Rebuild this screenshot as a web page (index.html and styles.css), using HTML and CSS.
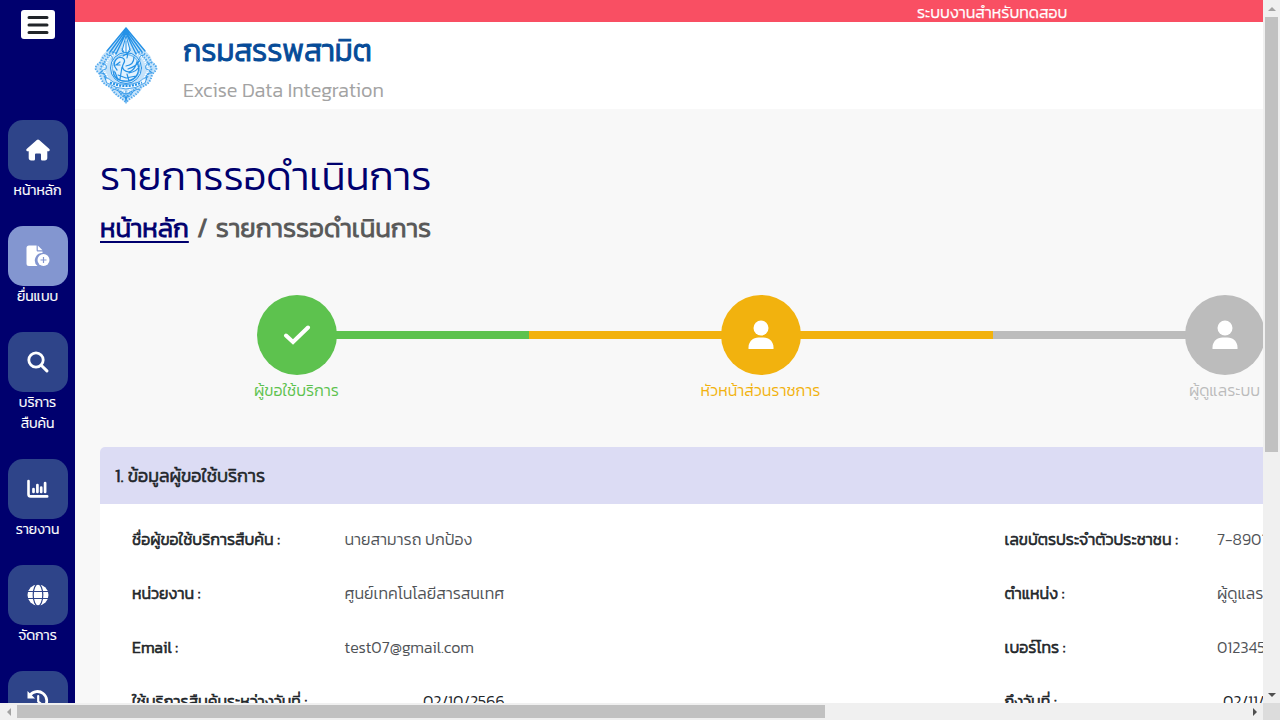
FILE: index.html
```html
<!DOCTYPE html>
<html lang="th">
<head>
<meta charset="utf-8">
<title>Excise Data Integration</title>
<link rel="stylesheet" href="styles.css">
</head>
<body>
<div class="window">
  <div class="viewport">
    <nav class="sidebar">
      <button class="menu-btn" aria-label="menu"><svg width="22" height="20" viewBox="0 0 22 20"><path d="M2 2.400h18M2 10h18M2 17.500h18" stroke="#212529" stroke-width="3" stroke-linecap="round"/></svg></button>
      <a class="nav-item"><span class="tile"><svg width="24" height="22" viewBox="0 0 24 22"><path fill="#fff" d="M10.800 1a1.800 1.800 0 0 1 2.400 0l9.900 8.800c1.200 1.100.5 2.500-.8 2.500h-1v6.700c0 1.600-.9 2.500-2.500 2.500h-2.200c-1 0-1.600-.6-1.600-1.600v-4.100c0-.8-.5-1.300-1.300-1.300h-3.400c-.8 0-1.300.5-1.300 1.300v4.100c0 1-.6 1.600-1.600 1.600H5.200c-1.600 0-2.500-.9-2.500-2.500v-6.700h-1c-1.300 0-2-1.400-.8-2.500z"/></svg></span><span class="nav-label">หน้าหลัก</span></a>
      <a class="nav-item"><span class="tile active"><svg width="24" height="22" viewBox="0 0 24 22"><path fill="#fff" d="M3 .5h7.600v4.700c0 .8.6 1.400 1.400 1.400h4.500v1.500a7.300 7.300 0 0 0-5 12.900H3A2.500 2.500 0 0 1 .5 18.500V3A2.500 2.500 0 0 1 3 .5zM11.800.5l4.700 4.800h-4.700z"/><circle cx="17.500" cy="15" r="6" fill="#fff"/><path d="M17.500 12v6M14.500 15h6" stroke="#8396d0" stroke-width="1.200"/></svg></span><span class="nav-label">ยื่นแบบ</span></a>
      <a class="nav-item"><span class="tile"><svg width="22" height="22" viewBox="0 0 22 22"><circle cx="9" cy="9" r="7.200" fill="none" stroke="#fff" stroke-width="2.800"/><path d="M14.200 14.200l5.700 5.700" stroke="#fff" stroke-width="3" stroke-linecap="round"/></svg></span><span class="nav-label">บริการ<br>สืบค้น</span></a>
      <a class="nav-item"><span class="tile"><svg width="22" height="20" viewBox="0 0 22 20"><path d="M1.500 2v13.200c0 1.500.7 2.200 2.200 2.200h16.500" fill="none" stroke="#fff" stroke-width="2.600" stroke-linecap="round"/><path d="M6.500 10v3M10.400 6v7M14.200 8.500v4.500M18.100 4v9" stroke="#fff" stroke-width="2.700" stroke-linecap="round"/></svg></span><span class="nav-label">รายงาน</span></a>
      <a class="nav-item"><span class="tile"><svg width="22" height="22" viewBox="0 0 22 22"><circle cx="11" cy="11" r="10.500" fill="#fff"/><g fill="none" stroke="#2e4489" stroke-width="1.200"><ellipse cx="11" cy="11" rx="4.800" ry="11"/><path d="M0 7.500h22M0 14.500h22"/></g></svg></span><span class="nav-label">จัดการ</span></a>
      <a class="nav-item"><span class="tile"><svg width="22" height="22" viewBox="0 0 22 22"><path d="M3 5.200A9.300 9.300 0 1 1 4.500 18" fill="none" stroke="#fff" stroke-width="2.800" stroke-linecap="round"/><path d="M.5 1v7.600h7.600z" fill="#fff"/><path d="M11.200 6v5.500l3.600 3" fill="none" stroke="#fff" stroke-width="2.200" stroke-linecap="round"/></svg></span></a>
    </nav>
    <div class="page">
      <div class="notice">ระบบงานสำหรับทดสอบ</div>
      <header class="brand">
        <svg class="emblem" width="66" height="78" viewBox="0 0 66 78">
          <path fill="#c4e2fa" d="M33 1L52 24Q58 28 59 34Q65 39 64 42Q62 46 59 48Q58 57 50 60Q45 69 39 70L33 77L27 70Q21 69 16 60Q8 57 7 48Q4 46 2 42Q1 39 7 34Q8 28 14 24z"/>
          <g fill="none" stroke="#2491e6" stroke-linecap="round">
            <g stroke-width="1.400"><path d="M33 1L14 24M33 3L17 25M33 5L20 26M33 6L23 27M33 1L52 24M33 3L49 25M33 5L46 26M33 6L43 27"/><path d="M33 9l-4 15 4 4 4-4z" fill="#eaf5ff" stroke-width="1"/><path d="M33 14v15M29 22l4 6 4-6" stroke-width="1"/></g>
            <g stroke-linecap="butt" stroke="#4ba5ec">
              <path stroke-width="2" stroke-dasharray="1.300 1.500" d="M20 25C12 27 9 31 8 35C1 40 1 42 7 47C8 55 12 58 18 60C22 68 26 69 33 75C40 69 44 68 48 60C54 58 58 55 59 47C65 42 65 40 58 35C57 31 54 27 46 25"/>
              <path stroke-width="2" stroke-dasharray="1.600 1.200" d="M23 26C15 29 12 33 11 37C6 41 7 43 11 47C12 53 16 56 21 58C25 64 28 66 33 71C38 66 41 64 45 58C50 56 54 53 55 47C59 43 60 41 55 37C54 33 51 29 43 26"/>
              <path stroke-width="2" stroke-dasharray="1 1.300" stroke="#fff" d="M22 27C16 30 14 34 13 38C9 41 10 43 13 47C15 53 18 55 23 58M44 27C50 30 52 34 53 38C57 41 56 43 53 47C51 53 48 55 43 58M28 61q5 9 10 0"/>
            </g>
            <circle cx="33" cy="41" r="15.500" fill="#e2f1fd" stroke-width="1"/>
            <circle cx="33" cy="41" r="13.500" stroke-width="1.400" stroke="#7bbdf1" stroke-dasharray="1 1"/>
            <g stroke-width="1.200"><path d="M24 43c-7-8 2-16 7-11c3 4-5 6 0 11c6 5 11-1 13-8c4 9 0 17-9 19c-10 1-16-5-14-10M33 39q8-1 8-9M35 42q9-3 11-8M36 46q9-2 10-7M27 35l-4 3 4 0M30 29l5-3-1 5M25 48l8 3 10-2M29 40l-2 12M22 45l3 8M34 47l2 7"/></g>
            <path fill="#f4faff" stroke-width=".8" d="M12 50q5 2 8 5q13 5 26 0q3-3 8-5l-2 6q-19 12-38 0z"/>
            <path d="M17 55.500q16 7 32 0" stroke-width="2.200" stroke-linecap="butt" stroke-dasharray="2 1.200"/>
            <path stroke-width=".8" d="M20 62q7 1 8 6M27 64q5 2 6 9M46 62q-7 1-8 6M39 64q-5 2-6 9M29 65q4 4 8 0M29 69q4 3 8 0M33 64v12M9 36q6 1 4 6q-5 1-6 4q7 0 6 6M57 36q-6 1-4 6q5 1 6 4q-7 0-6 6M15 28q6 0 4 5M51 28q-6 0-4 5"/>
          </g>
        </svg>
        <div class="brand-text"><span class="brand-name">กรมสรรพสามิต</span><span class="brand-sub">Excise Data Integration</span></div>
      </header>
      <main class="content">
        <h1 class="title">รายการรอดำเนินการ</h1>
        <div class="crumbs"><a class="crumb-link">หน้าหลัก</a><span class="slash">/</span><span>รายการรอดำเนินการ</span></div>
        <ol class="steps">
          <li class="step done"><span class="dot"><svg width="28" height="20" viewBox="0 0 28 20"><path d="M3 10.500l7 6.500L25 2.500" fill="none" stroke="#fff" stroke-width="4" stroke-linecap="round"/></svg></span><span class="step-label">ผู้ขอใช้บริการ</span></li>
          <li class="step current"><span class="dot"><svg width="26" height="30" viewBox="0 0 26 30"><circle cx="13" cy="8" r="7.500" fill="#fff"/><path fill="#fff" d="M.5 29v-1.500c0-6 4.500-10 10-10h5c5.500 0 10 4 10 10V29z"/></svg></span><span class="step-label">หัวหน้าส่วนราชการ</span></li>
          <li class="step wait"><span class="dot"><svg width="26" height="30" viewBox="0 0 26 30"><circle cx="13" cy="8" r="7.500" fill="#fff"/><path fill="#fff" d="M.5 29v-1.500c0-6 4.500-10 10-10h5c5.500 0 10 4 10 10V29z"/></svg></span><span class="step-label">ผู้ดูแลระบบ</span></li>
        </ol>
        <section class="card">
          <h2 class="card-head">1. ข้อมูลผู้ขอใช้บริการ</h2>
          <div class="fields">
            <div class="row"><b>ชื่อผู้ขอใช้บริการสืบค้น :</b><span>นายสามารถ ปกป้อง</span><b>เลขบัตรประจำตัวประชาชน :</b><span>7-8901</span></div>
            <div class="row"><b>หน่วยงาน :</b><span>ศูนย์เทคโนโลยีสารสนเทศ</span><b>ตำแหน่ง :</b><span>ผู้ดูแลระบบ</span></div>
            <div class="row"><b>Email :</b><span>test07@gmail.com</span><b>เบอร์โทร :</b><span>0123456</span></div>
            <div class="row dates"><b>ใช้บริการสืบค้นระหว่างวันที่ :</b><span>02/10/2566</span><b>ถึงวันที่ :</b><span>02/11/2566</span></div>
          </div>
        </section>
      </main>
    </div>
  </div>
  <div class="vbar"><i class="arrow up"></i><i class="thumb"></i><i class="arrow down"></i></div>
  <div class="hbar"><i class="arrow left"></i><i class="thumb"></i><i class="arrow right"></i></div>
  <div class="corner"></div>
</div>
</body>
</html>
```
FILE: styles.css
```css
* { box-sizing: border-box; }
body { margin: 0; overflow: hidden; font-family: Kanit, "Noto Sans Thai", "Noto Sans", sans-serif; font-weight: 300; color: #212529; }
svg { display: block; }
.window { display: grid; grid-template: 703px 17px / 1263px 17px; width: 1280px; height: 720px; overflow: hidden; }
.viewport { display: flex; overflow: hidden; background: #f8f8f8; }
.sidebar { flex: 0 0 75px; background: #00006e; display: flex; flex-direction: column; align-items: center; height: 703px; overflow: hidden; }
.menu-btn { flex: none; width: 34px; height: 29px; margin: 10px 0 81px 1px; padding: 0; border: 0; border-radius: 3px; background: #fff; display: flex; align-items: center; justify-content: center; }
.nav-item { flex: none; display: flex; flex-direction: column; align-items: center; margin-bottom: 25px; color: #fff; font-size: 14px; line-height: 21px; text-align: center; white-space: nowrap; -webkit-text-stroke: .2px; }
.tile { width: 60px; height: 60px; margin-left: 1px; padding: 0 1px 1px 0; border-radius: 15px; background: #2e4489; display: flex; align-items: center; justify-content: center; }
.tile.active { background: #8396d0; }
.page { flex: 0 0 1600px; }
.notice { height: 22px; background: #f94f63; color: #fff; font-size: 16px; line-height: 24px; padding-left: 842px; white-space: nowrap; -webkit-text-stroke: .25px; }
.brand { height: 87px; background: #fff; padding: 4px 0 0 18px; display: flex; gap: 24px; }
.emblem { margin-top: 1px; }
.brand-text { display: flex; flex-direction: column; align-items: flex-start; white-space: nowrap; }
.brand-name { font-size: 30px; line-height: 45px; -webkit-text-stroke: 1px; color: #064b98; margin-top: 2px; }
.brand-sub { font-size: 20px; line-height: 30px; margin-top: 2px; color: #a3a3a3; }
.content { padding: 42px 0 0 25px; white-space: nowrap; }
.title { margin: 0; font-size: 40px; line-height: 50px; font-weight: 300; color: #00006e; }
.crumbs { display: flex; align-items: center; height: 42px; margin-top: 6px; font-size: 26px; -webkit-text-stroke: .9px; line-height: 42px; color: #585858; }
.crumb-link { color: #00006e; text-decoration: underline; text-underline-offset: 4px; }
.slash { width: 27px; text-align: center; }
.steps { list-style: none; margin: 46px 0 0 -35px; padding: 0; display: flex; }
.step { flex: 0 0 464px; height: 106px; display: flex; flex-direction: column; align-items: center; font-size: 16px; color: #5dc24e; background: linear-gradient(90deg, transparent 50%, #5dc24e 50%) 0 36px / 100% 8px no-repeat; }
.dot { flex: none; width: 80px; height: 80px; padding: 0 1px 1px 0; border-radius: 50%; background: #5dc24e; display: flex; align-items: center; justify-content: center; }
.step-label { line-height: 30px; padding-right: 1px; }
.current { color: #f2b20e; background: linear-gradient(#f2b20e, #f2b20e) 0 36px / 100% 8px no-repeat; }
.current .dot { background: #f2b20e; }
.wait { color: #bcbcbc; background: linear-gradient(#bcbcbc, #bcbcbc) 0 36px / 50% 8px no-repeat; }
.wait .dot { background: #bcbcbc; }
.card { margin-top: 46px; width: 1700px; background: #fff; border-radius: 5px 5px 0 0; overflow: hidden; }
.card-head { margin: 0; height: 57px; padding-left: 15px; background: #dcdcf4; font-size: 18px; line-height: 57px; font-weight: 300; -webkit-text-stroke: .6px; }
.fields { padding: 8px 0 0 32px; }
.row { display: grid; grid-template-columns: 212.5px 660px 212.5px 300px; height: 54px; line-height: 54px; font-size: 16px; }
.row.dates { grid-template-columns: 291px 581.5px 218.5px 300px; }
.row b { font-weight: 300; -webkit-text-stroke: .6px; }
.row > * { justify-self: start; }
.row span { color: #505357; }
.row.dates span { color: #212529; }
.vbar, .hbar { display: flex; background: #f0f0f0; align-items: center; }
.vbar { flex-direction: column; }
.vbar .thumb { width: 13px; height: 435px; background: #c1c1c1; }
.hbar .thumb { width: 808px; height: 13px; background: #c1c1c1; }
.corner { background: #dcdcdc; }
.arrow { flex: 0 0 17px; width: 17px; height: 17px; display: flex; align-items: center; justify-content: center; }
.arrow::before { content: ""; border: 4px solid transparent; }
.up::before { border-top: 0; border-bottom-color: #a3a3a3; }
.down { margin-top: auto; }
.down::before { border-bottom: 0; border-top-color: #505050; }
.left::before { border-left: 0; border-right-color: #a3a3a3; }
.right { margin-left: auto; }
.right::before { border-right: 0; border-left-color: #505050; }
```
